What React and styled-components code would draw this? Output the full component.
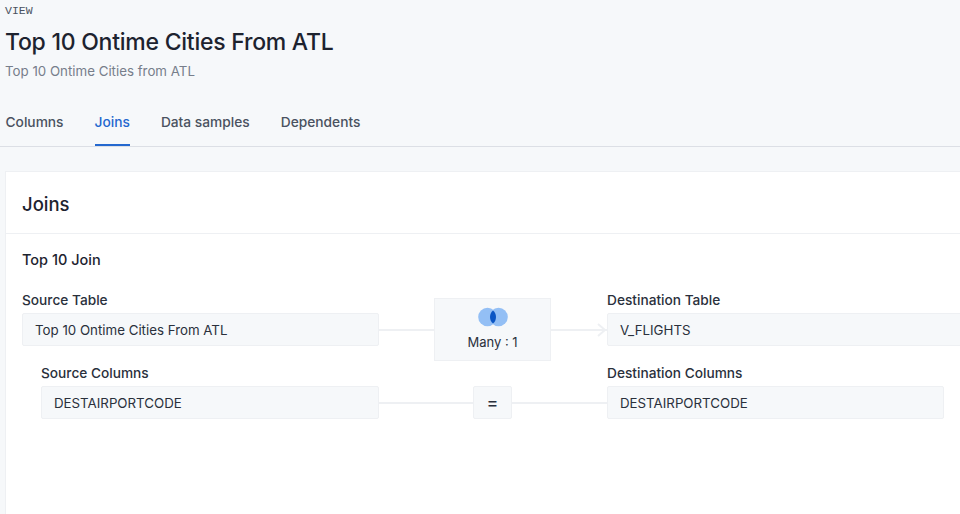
import React from "react";
import styled, { createGlobalStyle } from "styled-components";

const GlobalStyle = createGlobalStyle`
  html, body {
    margin: 0;
    padding: 0;
    height: 100%;
    overflow: hidden;
    background: #f6f8fa;
    font-family: Inter, "Liberation Sans", sans-serif;
    color: #1d232f;
  }
`;

const Page = styled.div`
  width: 960px;
  height: 514px;
  overflow: hidden;
  display: flex;
  flex-direction: column;
`;

const Header = styled.header`
  padding: 4px 5px 0;
`;

const Kind = styled.div`
  font-family: "Liberation Mono", monospace;
  font-size: 11.5px;
  line-height: 13px;
  color: #4a5260;
`;

const Title = styled.h1`
  margin: 10px 0 0;
  font-size: 23px;
  line-height: 30px;
  font-weight: 500;
  letter-spacing: -0.25px;
  color: #1d232f;
`;

const Subtitle = styled.p`
  margin: 5px 0 0;
  font-size: 13.3px;
  line-height: 18px;
  color: #777e8b;
`;

const Tabs = styled.nav`
  display: flex;
  gap: 31px;
  margin-top: 24px;
  padding: 0 5.5px;
  height: 43px;
  box-sizing: border-box;
  border-bottom: 1px solid #dcdfe5;
`;

const Tab = styled.div`
  font-size: 13.75px;
  font-weight: 500;
  line-height: 18px;
  padding-top: 9px;
  color: ${(p) => (p.$active ? "#2468cf" : "#4a5260")};
  border-bottom: 2px solid ${(p) => (p.$active ? "#2468cf" : "transparent")};
`;

const Card = styled.section`
  margin: 24px 0 0 5px;
  flex: 1;
  background: #fff;
  border: 1px solid #eef0f3;
  border-right: 0;
  border-bottom: 0;
`;

const CardHead = styled.div`
  height: 62px;
  box-sizing: border-box;
  padding: 3px 16px 0;
  display: flex;
  align-items: center;
  border-bottom: 1px solid #eef0f3;
`;

const CardTitle = styled.h2`
  margin: 0;
  font-size: 18.5px;
  font-weight: 500;
  color: #1d232f;
`;

const CardBody = styled.div`
  padding: 16px 0 0 16px;
`;

const JoinName = styled.h3`
  margin: 0 0 22px;
  font-size: 14.5px;
  line-height: 20px;
  font-weight: 500;
  color: #1d232f;
`;

const Row = styled.div`
  display: grid;
  grid-template-columns: ${(p) => p.$left}px 228px ${(p) => p.$right}px;
  margin-left: ${(p) => p.$indent || 0}px;
  margin-bottom: 19px;
`;

const Field = styled.div`
  display: flex;
  flex-direction: column;
`;

const Label = styled.label`
  font-size: 13.7px;
  font-weight: 500;
  line-height: 16px;
  height: 21px;
  color: #2a303c;
`;

const Value = styled.div`
  height: 33px;
  box-sizing: border-box;
  padding: 0 12px;
  display: flex;
  align-items: center;
  font-size: 13.3px;
  color: #2a303c;
  background: #f6f8fa;
  border: 1px solid #eef0f3;
  border-radius: 2px;
`;

const Link = styled.div`
  position: relative;
  display: flex;
  align-items: center;
  justify-content: center;
  height: 33px;
  margin-top: 21px;
  padding-right: 1px;

  &::before {
    content: "";
    position: absolute;
    left: 0;
    right: 0;
    top: 50%;
    margin-top: -1px;
    height: 2px;
    background: #eef0f3;
  }
`;

const Arrow = styled.svg`
  position: absolute;
  right: 0;
  top: 50%;
  margin-top: -7px;
`;

const RelationBox = styled.div`
  position: relative;
  width: 117px;
  height: 63px;
  flex: none;
  box-sizing: border-box;
  background: #f6f8fa;
  border: 1px solid #eef0f3;
  display: flex;
  flex-direction: column;
  align-items: center;
  padding-top: 8px;
  gap: 6px;
  font-size: 13px;
  line-height: 18px;
  color: #2a303c;
`;

const EqualsBox = styled.div`
  position: relative;
  width: 39px;
  height: 33px;
  box-sizing: border-box;
  background: #f6f8fa;
  border: 1px solid #eef0f3;
  border-radius: 2px;
  display: flex;
  align-items: center;
  justify-content: center;
  font-size: 18px;
  color: #2a303c;
`;

const VennIcon = () => (
  <svg width="32" height="20" viewBox="0 0 32 20">
    <circle cx="10.500" cy="10" r="9.300" fill="#93bff5" />
    <circle cx="21.500" cy="10" r="9.300" fill="#93bff5" />
    <path d="M16 3.500 C20 6.500 20 13.500 16 16.500 C12 13.500 12 6.500 16 3.500 Z" fill="#0a55c4" />
  </svg>
);

export default function App() {
  return (
    <Page>
      <GlobalStyle />
      <Header>
        <Kind>VIEW</Kind>
        <Title>Top 10 Ontime Cities From ATL</Title>
        <Subtitle>Top 10 Ontime Cities from ATL</Subtitle>
      </Header>
      <Tabs>
        <Tab>Columns</Tab>
        <Tab $active>Joins</Tab>
        <Tab>Data samples</Tab>
        <Tab>Dependents</Tab>
      </Tabs>
      <Card>
        <CardHead>
          <CardTitle>Joins</CardTitle>
        </CardHead>
        <CardBody>
          <JoinName>Top 10 Join</JoinName>
          <Row $left={357} $right={400}>
            <Field>
              <Label>Source Table</Label>
              <Value>Top 10 Ontime Cities From ATL</Value>
            </Field>
            <Link>
              <Arrow width="10" height="14" viewBox="0 0 10 14" fill="none">
                <path d="M1 1 L8 7 L1 13" stroke="#eef0f3" strokeWidth="2" />
              </Arrow>
              <RelationBox>
                <VennIcon />
                Many : 1
              </RelationBox>
            </Link>
            <Field>
              <Label>Destination Table</Label>
              <Value>V_FLIGHTS</Value>
            </Field>
          </Row>
          <Row $indent={19} $left={338} $right={337}>
            <Field>
              <Label>Source Columns</Label>
              <Value>DESTAIRPORTCODE</Value>
            </Field>
            <Link>
              <EqualsBox>=</EqualsBox>
            </Link>
            <Field>
              <Label>Destination Columns</Label>
              <Value>DESTAIRPORTCODE</Value>
            </Field>
          </Row>
        </CardBody>
      </Card>
    </Page>
  );
}
